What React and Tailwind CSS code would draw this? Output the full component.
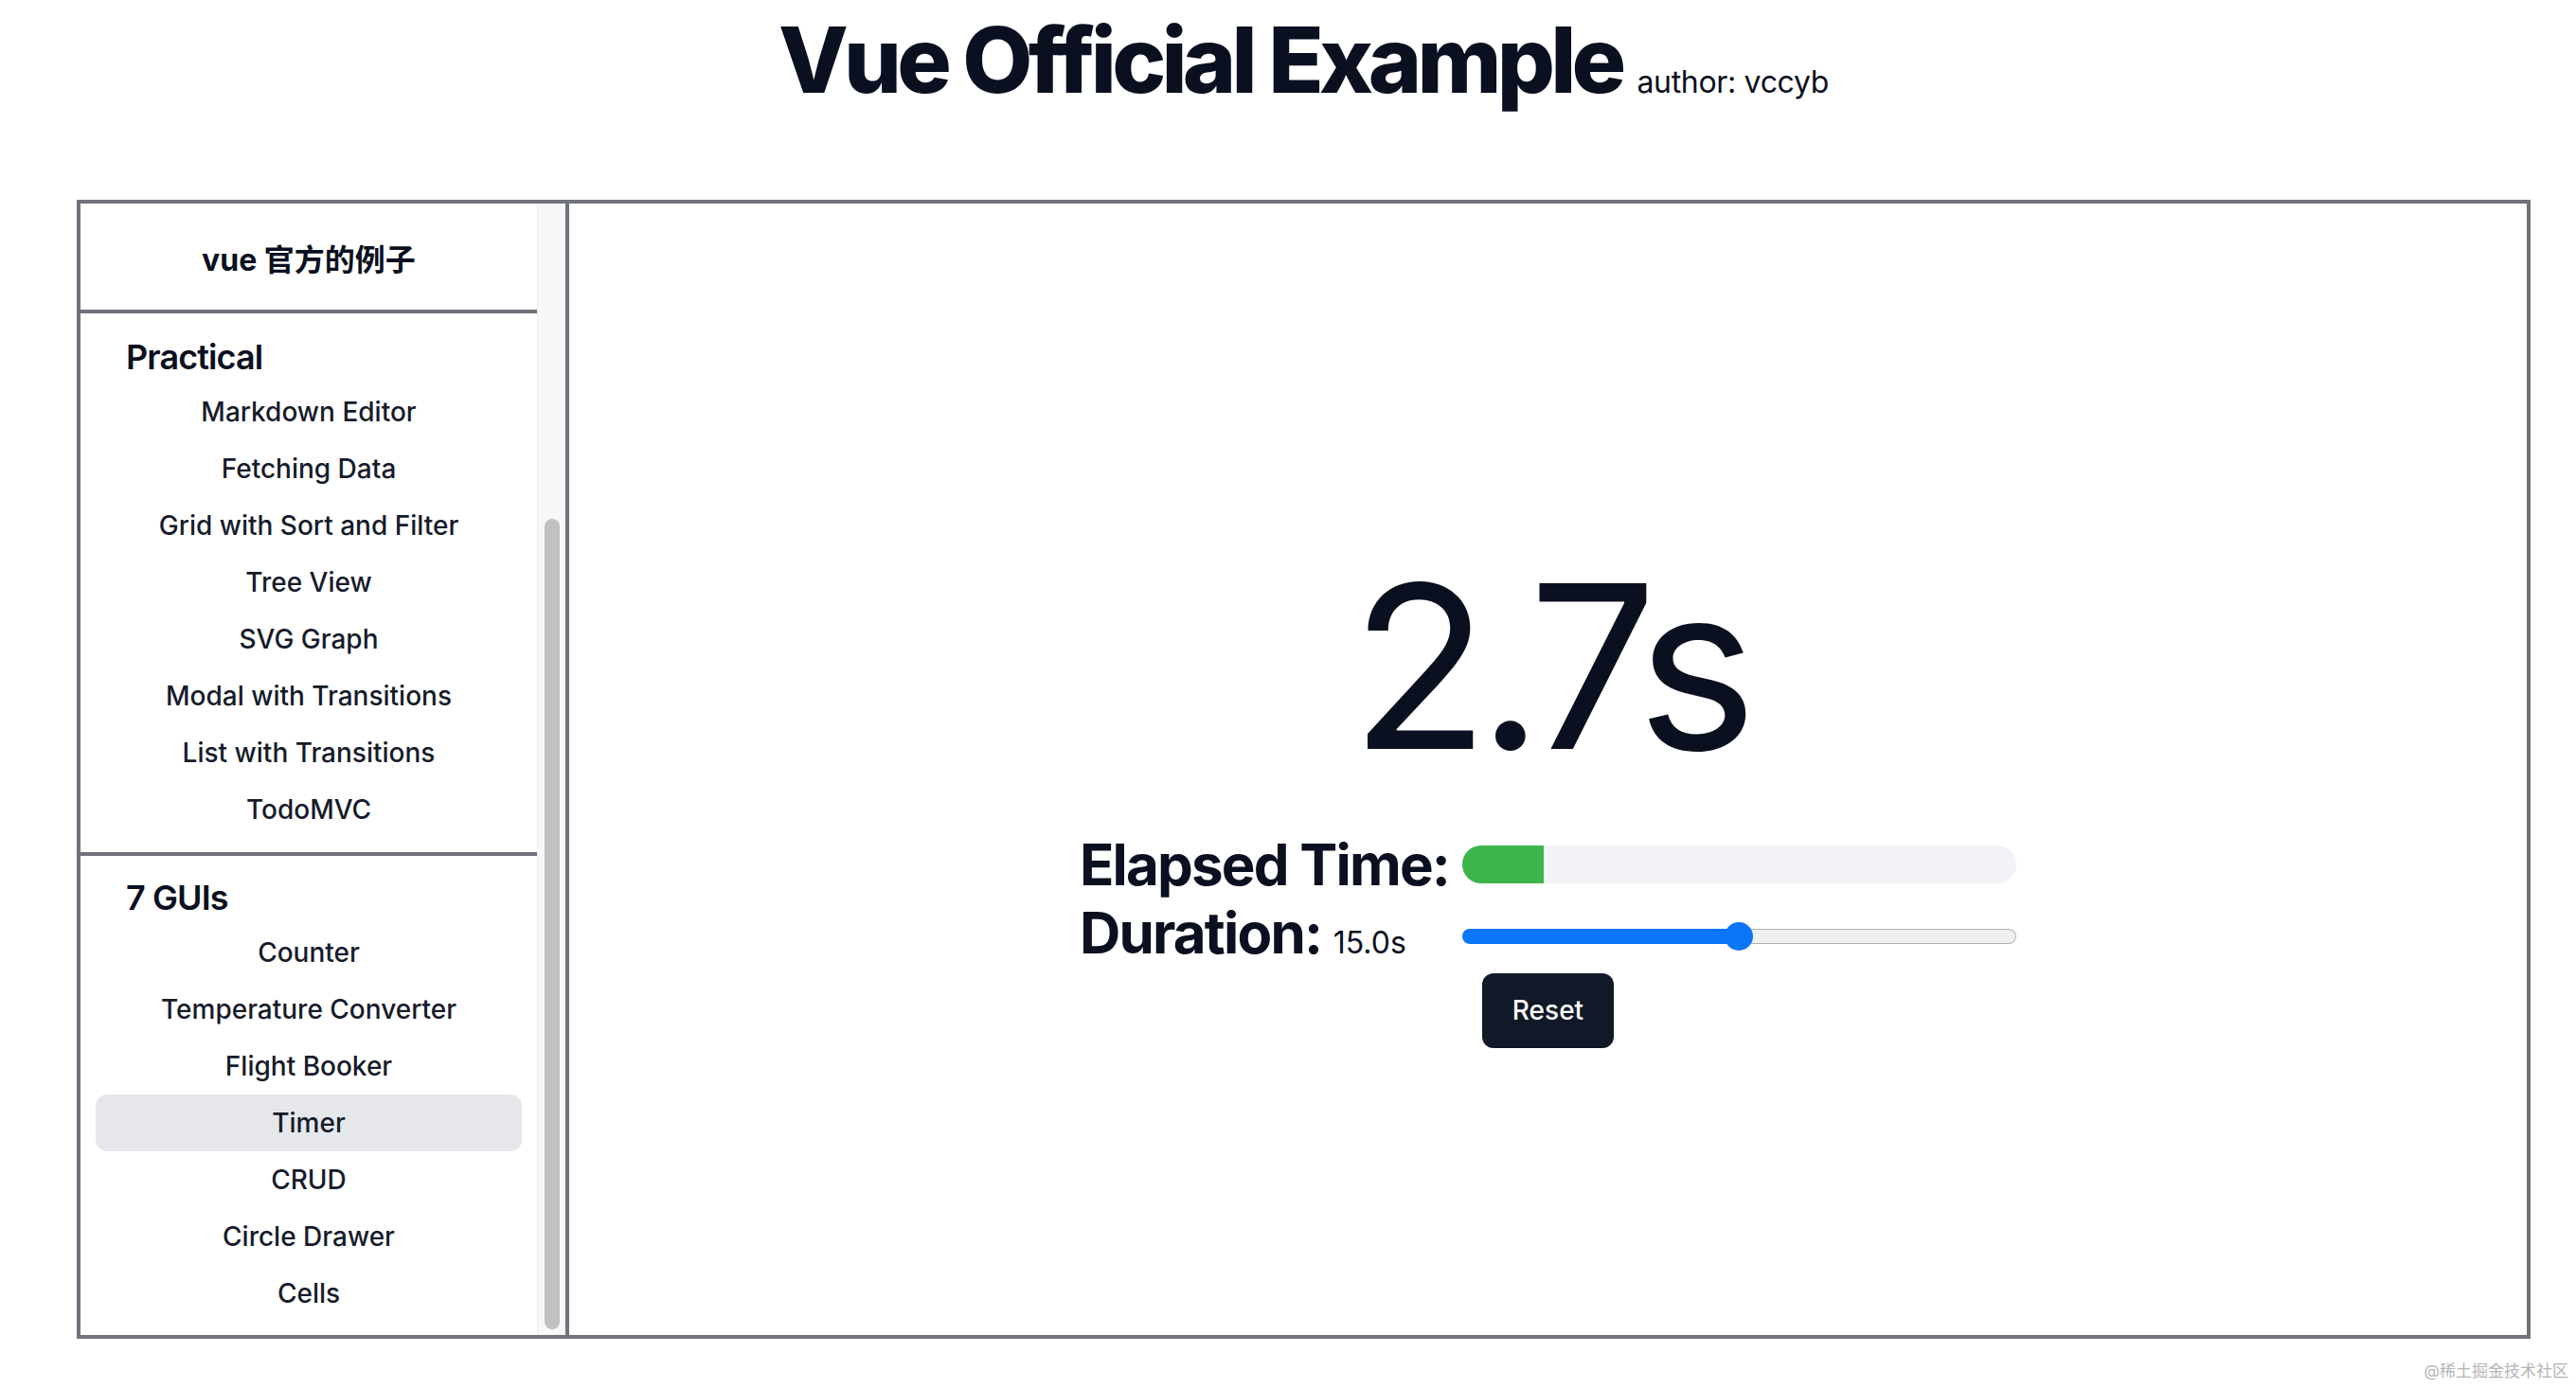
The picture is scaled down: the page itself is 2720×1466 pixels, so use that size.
import React, { useState } from 'react';

const SECTIONS = [
  {
    title: 'Practical',
    items: [
      'Markdown Editor',
      'Fetching Data',
      'Grid with Sort and Filter',
      'Tree View',
      'SVG Graph',
      'Modal with Transitions',
      'List with Transitions',
      'TodoMVC',
    ],
  },
  {
    title: '7 GUIs',
    items: ['Counter', 'Temperature Converter', 'Flight Booker', 'Timer', 'CRUD', 'Circle Drawer', 'Cells'],
  },
];

const Sidebar = ({ active, onSelect }) => {
  return (
    <aside className="flex w-[516px] shrink-0 border-r-4 border-[#70727c]">
      <div className="flex w-[482px] flex-col overflow-hidden">
        <div className="flex h-[116px] shrink-0 items-center justify-center border-b-4 border-[#70727c] pt-[8px] text-[32px] leading-[32px] font-bold">
          vue 官方的例子
        </div>
        {SECTIONS.map((section, i) => (
          <div
            key={section.title}
            className={i === 0 ? 'border-b-4 border-[#70727c] pt-[18px] pb-[15px]' : 'pt-4 pb-4'}
          >
            <h3 className="pl-12 text-[36px] leading-[56px] font-semibold tracking-tight">{section.title}</h3>
            {section.items.map((item) => (
              <div
                key={item}
                onClick={() => onSelect(item)}
                className={
                  item === active
                    ? 'mx-4 cursor-pointer rounded-[12px] bg-[#e5e7eb] text-center text-[28px] leading-[60px] font-medium text-[#161b2b]'
                    : 'mx-4 cursor-pointer rounded-[12px] text-center text-[28px] leading-[60px] font-medium text-[#161b2b]'
                }
              >
                {item}
              </div>
            ))}
          </div>
        ))}
      </div>
      {/* scrollbar */}
      <div className="flex w-[30px] flex-col border-l border-[#ececec] bg-[#f8f8f8] pt-[333px] pr-[6px] pb-[6px] pl-[7px]">
        <div className="flex-1 rounded-full bg-[#c1c1c1]" />
      </div>
    </aside>
  );
};

const TimerDemo = () => {
  const elapsed = 2.7;
  const duration = 15;

  return (
    <main className="flex flex-1 flex-col items-center justify-center pt-[65px]">
      <div className="mb-[53px] text-[240px] leading-[240px] font-normal tracking-[-0.05em]">{elapsed.toFixed(1)}s</div>
      <div className="grid grid-cols-[auto_585px] items-center gap-x-[14px]">
        <div className="text-[60px] leading-[72px] font-bold tracking-[-0.03em] whitespace-nowrap">Elapsed Time:</div>
        <div className="h-[40px] overflow-hidden rounded-full bg-[#f1f3f6]">
          <div className="h-full w-[86px] bg-[#3db54b]" />
        </div>
        <div className="text-[60px] leading-[72px] font-bold tracking-[-0.03em] whitespace-nowrap">
          Duration: <span className="text-[32px] leading-none font-normal tracking-normal">{duration.toFixed(1)}s</span>
        </div>
        <div className="relative mt-[8px] flex h-[16px]">
          <div className="h-full w-[292px] rounded-l-full bg-[#0b76f7]" />
          <div className="h-full flex-1 rounded-r-full border-[1.5px] border-l-0 border-[#b2b2b2] bg-[#efefef]" />
          <div className="absolute top-[-7px] left-[277px] h-[30px] w-[30px] rounded-full bg-[#0b76f7]" />
        </div>
      </div>
      <button className="mt-[7px] h-[79px] w-[139px] rounded-[12px] bg-[#111827] text-[28px] font-medium text-white">
        Reset
      </button>
    </main>
  );
};

export default function App() {
  const [active, setActive] = useState('Timer');

  return (
    <div className="min-h-screen bg-white font-['Inter','Noto_Sans_CJK_SC',sans-serif] text-[#0b1020]">
      <div className="mr-[48px] ml-[81px]">
        <h1 className="pt-[15px] text-center text-[96px] leading-[96px] font-extrabold tracking-[-0.05em]">
          Vue Official Example
          <span className="ml-[16px] text-[32px] leading-none font-normal tracking-[-0.01em]">author: vccyb</span>
        </h1>
        <div className="mt-[100px] flex h-[1203px] border-4 border-[#70727c]">
          <Sidebar active={active} onSelect={setActive} />
          <TimerDemo />
        </div>
      </div>
      <div className="mt-[24px] pr-[8px] text-right text-[17px] leading-[20px] text-[#b4b4b4]">@稀土掘金技术社区</div>
    </div>
  );
}
